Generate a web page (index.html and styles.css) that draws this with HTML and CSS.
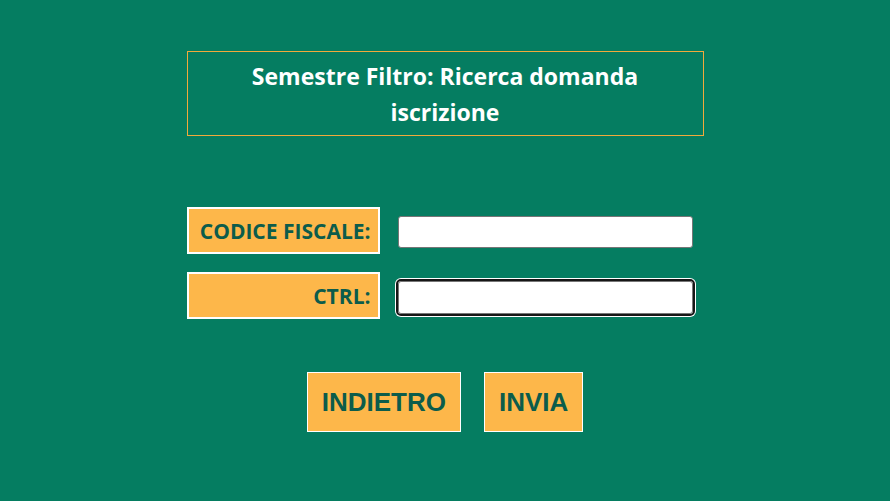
FILE: index.html
```html
<!DOCTYPE html>
<html lang="it">
<head>
<meta charset="utf-8">
<title>Semestre Filtro</title>
<link rel="stylesheet" href="styles.css">
</head>
<body>
<div class="wrap">
  <div class="title">Semestre Filtro: Ricerca domanda<br>iscrizione</div>
  <form class="form">
    <div class="row">
      <label class="lbl" for="cf">CODICE FISCALE:</label>
      <input class="field" id="cf" type="text">
    </div>
    <div class="row">
      <label class="lbl" for="ctrl">CTRL:</label>
      <input class="field focus" id="ctrl" type="text">
    </div>
    <div class="actions">
      <button type="button" class="btn">INDIETRO</button>
      <button type="button" class="btn">INVIA</button>
    </div>
  </form>
</div>
</body>
</html>
```
FILE: styles.css
```css
html, body {
  margin: 0;
  padding: 0;
  background: #057d61;
}
body {
  font-family: "Open Sans", "DejaVu Sans", sans-serif;
}
.wrap {
  width: 517px;
  margin: 0 auto;
  padding-top: 51px;
}
.title {
  box-sizing: border-box;
  height: 85px;
  border: 1px solid #f2a93b;
  padding: 6px 10px 5px;
  color: #ffffff;
  font-weight: 700;
  font-size: 23px;
  line-height: 36px;
  text-align: center;
}
.form {
  margin: 71px 0 0;
  display: flex;
  flex-direction: column;
  gap: 18px;
}
.row {
  display: flex;
  align-items: center;
  gap: 18px;
}
.lbl {
  box-sizing: border-box;
  width: 193px;
  height: 47px;
  border: 2px solid #ffffff;
  background: #fdb74a;
  color: #0c5c4b;
  font-weight: 700;
  font-size: 21px;
  text-align: right;
  padding: 0 7px;
  display: flex;
  align-items: center;
  justify-content: flex-end;
}
.field {
  box-sizing: border-box;
  width: 295px;
  height: 32px;
  margin: 3px 0 0;
  border: 1px solid #767676;
  border-radius: 3px;
  background: #ffffff;
  padding: 0 4px;
  font-size: 16px;
}
.field.focus {
  height: 33px;
  margin-top: 4px;
  outline: 2px solid #161616;
  outline-offset: 0;
  box-shadow: 0 0 0 3px #ffffff;
}
.actions {
  margin-top: 35px;
  display: flex;
  justify-content: center;
  gap: 23px;
}
.btn {
  box-sizing: border-box;
  height: 60px;
  padding: 0 14px;
  border: 1px solid #ffffff;
  border-radius: 0;
  background: #fdb74a;
  color: #0c5c4b;
  font-family: "Liberation Sans", Arial, sans-serif;
  font-weight: 700;
  font-size: 26px;
}
```
